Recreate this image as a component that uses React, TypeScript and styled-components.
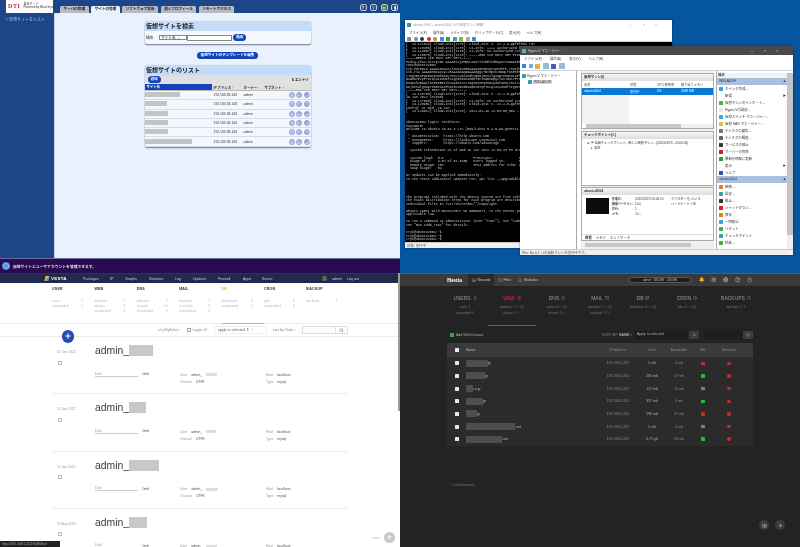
import React from "react";
import styled, { createGlobalStyle } from "styled-components";
import { Bell, Camera, File, Folder, Globe, Home, List, Plus, Power, Search, Settings, User, ArrowRight, BarChart2, Database, Clock, Mail, Info, ArrowUp, Pencil, Copy, Trash2, HelpCircle, FileText } from "lucide-react";

const JP = `"Liberation Sans", "Noto Sans CJK JP", sans-serif`;

const Global = createGlobalStyle`
  html, body { margin: 0; padding: 0; background: #fff; }
  #root { width: 800px; height: 547px; overflow: hidden; }
  * { box-sizing: border-box; }
`;

const Page = styled.div`
  width: 800px; height: 547px;
  display: grid;
  grid-template-columns: 400px 400px;
  grid-template-rows: 273px 274px;
  font-family: ${JP};
  overflow: hidden;
`;
const Pane = styled.section`
  position: relative; overflow: hidden; filter: blur(0.35px);
  min-width: 0; min-height: 0;
`;
const Blur = styled.span<{ $w: number; $h?: number; $c?: string }>`
  display: inline-block; width: ${(p) => p.$w}px; height: ${(p) => p.$h ?? 6}px;
  background: ${(p) => p.$c ?? "#c4c4c4"}; filter: blur(0.6px); flex: none;
`;

/* ---------- pane 1: server panel ---------- */
const PanelPane = styled(Pane)`
  display: grid; grid-template-columns: 54px 1fr; grid-template-rows: 12.5px 245.5px 15px;
  background: #e9f1fd;
`;
const PanelHeader = styled.header`
  grid-column: 1 / 3; background: #1c4687; display: flex; align-items: flex-end; padding-left: 6px;
`;
const Logo = styled.div`
  width: 47px; height: 12.5px; background: #fff; align-self: flex-start; display: flex; align-items: center; gap: 3px; padding-left: 2px;
`;
const LogoMark = styled.span`
  color: #c8232c; font-size: 6px; font-weight: 700; letter-spacing: 0.6px; font-family: "Liberation Serif", serif;
`;
const LogoText = styled.span`
  font-size: 3px; line-height: 3.6px; color: #333; white-space: nowrap;
`;
const PanelTabs = styled.nav`
  display: flex; gap: 2.6px; margin-left: 7px;
`;
const PanelTab = styled.div<{ $on?: boolean }>`
  height: 6.5px; padding: 0 3.5px; font-size: 3.6px; line-height: 7px; white-space: nowrap;
  background: ${(p) => (p.$on ? "#e9f1fd" : "#b7bcc4")}; color: #222; font-weight: 700; border-radius: 1.5px 1.5px 0 0;
`;
const HeadIcons = styled.div`
  margin-left: auto; display: flex; gap: 3.5px; padding: 0 2px 1.5px 0;
`;
const HeadIcon = styled.span<{ $c?: string }>`
  width: 7px; height: 7px; border-radius: 2px; border: 0.6px solid #bcd; background: ${(p) => p.$c ?? "#2a4f8e"};
  color: #fff; display: flex; align-items: center; justify-content: center; font-size: 4px; font-weight: 700;
`;
const Sidebar = styled.aside`
  background: #1c4687; color: #9ec0ee; font-size: 4px; padding: 3px 0 0 5px; white-space: nowrap;
`;
const PanelMain = styled.main`
  display: flex; flex-direction: column; align-items: center; padding: 8.5px 0 0 0; min-height: 0; border-left: 0.5px solid #c3d3ea;
`;
const Card = styled.div`
  width: 166px; background: #f4f8fe; border-radius: 2px; box-shadow: 0 1px 1.5px rgba(40,50,70,.65); overflow: hidden;
`;
const CardTitle = styled.div`
  height: 10px; background: #c5dcf8; font-size: 6px; font-weight: 700; line-height: 10px; padding-left: 1.5px; color: #222;
`;
const SearchRow = styled.div`
  height: 13px; display: flex; align-items: center; font-size: 3.6px; padding: 0 1.5px; color: #222;
`;
const Select = styled.span`
  margin-left: 6px; width: 28px; height: 5.5px; border: 0.5px solid #888; background: #fff; font-size: 3.6px; line-height: 5px; padding-left: 1px;
`;
const TextInput = styled.span`
  width: 45px; height: 6px; border: 0.5px solid #888; background: #fff;
`;
const BlueBtn = styled.span<{ $ml?: number; $wide?: boolean }>`
  margin-left: ${(p) => p.$ml ?? 0}px; display: inline-block; height: 7px; padding: 0 ${(p) => (p.$wide ? 4 : 3)}px;
  background: #1343b8; color: #fff; font-size: 3.6px; line-height: 7px; font-weight: 700; border-radius: 3.5px; white-space: nowrap;
`;
const CenterBtn = styled(BlueBtn)`
  margin: 8px 0 6px; width: 61px; text-align: center; padding: 0;
`;
const ListBar = styled.div`
  height: 9px; background: #e0e0e0; display: flex; justify-content: space-between; align-items: center; padding: 0 2px 0 3px; font-size: 3.4px; font-weight: 700;
`;
const RowGrid = styled.div<{ $head?: boolean }>`
  display: grid; grid-template-columns: 69px 30px 21px 22px 24px; align-items: center;
  height: ${(p) => (p.$head ? 7 : 9.3)}px; font-size: 3.4px; color: #333;
  background: ${(p) => (p.$head ? "#e0e0e0" : "transparent")};
  border-bottom: 0.5px solid ${(p) => (p.$head ? "#bbb" : "#d2dceb")};
  font-weight: ${(p) => (p.$head ? 700 : 400)};
  white-space: nowrap;
`;
const SiteHead = styled.span`
  background: #1343b8; color: #fff; height: 6px; line-height: 6px; padding-left: 2px; align-self: start; margin-right: 1.5px;
`;
const RowActions = styled.span`
  display: flex; gap: 1.2px; justify-content: flex-end; padding-right: 1px; color: #4d66b8;
`;
const RoundIcon = styled.span`
  width: 6px; height: 6px; border-radius: 50%; background: #d4dcf3; border: 0.4px solid #8ea0d4; display: flex; align-items: center; justify-content: center;
`;
const PanelFoot = styled.footer`
  grid-column: 1 / 3; background: #2a0b52; border-top: 0.7px solid #6a6a9a; display: flex; align-items: center; gap: 3px; padding-left: 2px; color: #ddd; font-size: 3.8px; font-weight: 700;
`;
const InfoDot = styled.span`
  width: 8px; height: 8px; border-radius: 50%; background: #3f7fd8; color: #fff; display: flex; align-items: center; justify-content: center;
`;

const sites = [35, 22, 23, 23, 23, 47];

function ServerPanel() {
  return (
    <PanelPane>
      <PanelHeader>
        <Logo>
          <LogoMark>DTI</LogoMark>
          <LogoText>自社サーバ<br />Powered by BlueOnyx</LogoText>
        </Logo>
        <PanelTabs>
          <PanelTab>サーバの管理</PanelTab>
          <PanelTab $on>サイトの管理</PanelTab>
          <PanelTab>ソフトウェア更新</PanelTab>
          <PanelTab>個人プロフィール</PanelTab>
          <PanelTab>リモートアクセス</PanelTab>
        </PanelTabs>
        <HeadIcons>
          <HeadIcon>?</HeadIcon>
          <HeadIcon>≡</HeadIcon>
          <HeadIcon $c="#3e8a45">●</HeadIcon>
          <HeadIcon>▮</HeadIcon>
        </HeadIcons>
      </PanelHeader>
      <Sidebar>✎ 仮想サイトをリスト</Sidebar>
      <PanelMain>
        <Card>
          <CardTitle>仮想サイトを検索</CardTitle>
          <SearchRow>
            検索
            <Select>サイト名 ⌄</Select>
            <TextInput />
            <BlueBtn $ml={1}>検索</BlueBtn>
          </SearchRow>
        </Card>
        <CenterBtn $wide>仮想サイトのテンプレートを編集</CenterBtn>
        <Card>
          <CardTitle>仮想サイトのリスト</CardTitle>
          <ListBar>
            <BlueBtn>追加</BlueBtn>
            <span>6 エントリ</span>
          </ListBar>
          <RowGrid $head>
            <SiteHead>サイト名</SiteHead>
            <span>IP アドレス ↑</span>
            <span>オーナー ↑</span>
            <span>サブネット ↑</span>
            <span />
          </RowGrid>
          {sites.map((w, i) => (
            <RowGrid key={i}>
              <span><Blur $w={w} $h={5} /></span>
              <span>192.163.58.146</span>
              <span>admin</span>
              <span />
              <RowActions>
                <RoundIcon><Pencil size={3.5} /></RoundIcon>
                <RoundIcon><Copy size={3.5} /></RoundIcon>
                <RoundIcon><Trash2 size={3.5} /></RoundIcon>
              </RowActions>
            </RowGrid>
          ))}
        </Card>
      </PanelMain>
      <PanelFoot>
        <InfoDot><Info size={6} /></InfoDot>
        仮想サイトとユーザアカウントを管理できます。
      </PanelFoot>
    </PanelPane>
  );
}

/* ---------- pane 2: desktop windows ---------- */
const Desktop = styled(Pane)`
  background: #06569f;
`;
const Win = styled.div<{ $x: number; $y: number; $w: number; $h: number }>`
  position: absolute; left: ${(p) => p.$x}px; top: ${(p) => p.$y}px; width: ${(p) => p.$w}px; height: ${(p) => p.$h}px;
  background: #fff; display: flex; flex-direction: column; box-shadow: 0 0 2px rgba(0,0,0,.5);
  font-size: 3.4px; color: #333; white-space: nowrap;
`;
const TitleBar = styled.div<{ $dark?: boolean }>`
  height: 9px; flex: none; display: flex; align-items: center; gap: 2px; padding: 0 5px 0 2px;
  background: ${(p) => (p.$dark ? "#4a4a4a" : "#fff")}; color: ${(p) => (p.$dark ? "#ccc" : "#999")};
`;
const WinCtl = styled.span<{ $dark?: boolean }>`
  margin-left: auto; letter-spacing: 10px; color: ${(p) => (p.$dark ? "#ccc" : "#999")};
`;
const MenuBar = styled.div<{ $gap: number }>`
  height: 7px; flex: none; display: flex; align-items: center; gap: ${(p) => p.$gap}px; padding-left: 4px; color: #444; font-size: 3.4px;
`;
const ToolBar = styled.div<{ $h: number }>`
  height: ${(p) => p.$h}px; flex: none; display: flex; align-items: center; gap: 2.5px; padding-left: 2px; border-bottom: 0.5px solid #c8d4e0;
`;
const Tool = styled.span<{ $c: string; $round?: boolean; $s?: number }>`
  width: ${(p) => p.$s ?? 4}px; height: ${(p) => p.$s ?? 4}px; background: ${(p) => p.$c}; border-radius: ${(p) => (p.$round ? "50%" : "0.5px")}; flex: none;
`;
const Console = styled.pre`
  flex: 1; min-height: 0; margin: 0; background: #000; color: #c9c9c9; font-family: "Liberation Mono", monospace; font-size: 3.3px; line-height: 3.55px; padding: 1px 0 0 1px; overflow: hidden;
`;
const StatusBar = styled.div`
  height: 6px; flex: none; background: #efefef; color: #555; font-size: 3.4px; line-height: 6px; padding-left: 2px; border-top: 0.5px solid #ccc;
`;
const HvBody = styled.div`
  flex: 1; min-height: 0; display: grid; grid-template-columns: 57px 4px 133px 2px 71px 6px;
  background: #fff;
`;
const Tree = styled.div`
  padding: 2px 0 0 2px; border-right: 0.5px solid #aaa; display: flex; flex-direction: column; gap: 1px; color: #444;
`;
const TreeItem = styled.div<{ $in?: number }>`
  display: flex; align-items: center; gap: 1px; height: 5px; margin-left: ${(p) => p.$in ?? 0}px;
`;
const TreeLabel = styled.span<{ $sel?: boolean }>`
  background: ${(p) => (p.$sel ? "#d3d3d3" : "transparent")}; padding: 0 1px;
`;
const Center = styled.div`
  grid-column: 3; display: flex; flex-direction: column; min-width: 0; background: #f0f0f0; padding-top: 2px;
`;
const Box = styled.div<{ $h: number }>`
  height: ${(p) => p.$h}px; flex: none; background: #fff; border: 0.5px solid #aaa; margin-bottom: 1.5px; display: flex; flex-direction: column; overflow: hidden;
`;
const BoxHead = styled.div`
  height: 7px; flex: none; background: linear-gradient(#f7f7f7, #dcdcdc); font-size: 3.4px; font-weight: 700; line-height: 7px; padding-left: 2px; color: #333;
`;
const VmCols = styled.div<{ $sel?: boolean }>`
  display: grid; grid-template-columns: 46px 27px 24px 1fr; height: ${(p) => (p.$sel ? 6.5 : 7)}px; align-items: center; padding-left: 2px; flex: none; font-size: 3.2px;
  background: ${(p) => (p.$sel ? "#0a78d7" : "transparent")}; color: ${(p) => (p.$sel ? "#fff" : "#444")};
`;
const VmFill = styled.div`
  flex: 1; min-height: 0; background: linear-gradient(to right, #f3f3f3 0 47px, #fff 47px);
`;
const HScroll = styled.div<{ $fill: number }>`
  height: 4px; flex: none; background: linear-gradient(to right, #c8c8c8 ${(p) => p.$fill}%, #efefef ${(p) => p.$fill}%); margin: 0 0 0 4px;
`;
const CpTree = styled.div`
  padding: 2px 0 0 5px; display: flex; flex-direction: column; gap: 0.6px; line-height: 4.4px; font-size: 3.1px;
`;
const Detail = styled.div`
  flex: 1; min-height: 0; display: grid; grid-template-columns: 26px 23px 36px 1fr; grid-template-rows: repeat(4, 5px); padding: 2px 1px 0 4px; line-height: 5px; font-size: 3.1px;
`;
const Thumb = styled.div`
  grid-row: 1 / 5; width: 23px; height: 16px; background: #0b0b0b; margin-top: 1px;
`;
const DetailLabel = styled.b`
  font-size: 2.9px;
`;
const DetailTabs = styled.div`
  display: flex; gap: 4px; padding: 0 0 0 3px; height: 6px; line-height: 6px; margin-top: auto; border-top: 0.5px solid #ddd; flex: none;
`;
const Actions = styled.div`
  grid-column: 5; background: #fff; border-left: 0.5px solid #aaa; display: flex; flex-direction: column; overflow: hidden; padding-top: 2px;
`;
const ActionHead = styled.div`
  height: 5px; line-height: 5px; font-weight: 700; background: #f2f2f2; padding-left: 1px; flex: none;
`;
const ActionBand = styled.div<{ $mt?: number }>`
  height: 7px; flex: none; background: #a7c1de; line-height: 7px; padding: 0 1px 0 2px; display: flex; justify-content: space-between; margin-top: ${(p) => p.$mt ?? 0}px;
`;
const ActionRow = styled.div`
  height: 7px; flex: none; display: flex; align-items: center; gap: 2px; padding: 0 1px 0 2px;
`;
const Arrow = styled.span`
  margin-left: auto; font-size: 3px;
`;
const VScroll = styled.div`
  grid-column: 6; background: linear-gradient(#c4c4c4 0 92%, #efefef 92%); margin: 2px 0 0 0;
`;

const log = `[  14.122029] cloud-init[1170]: Cloud-init v. 22.2-0-g9f8f0da ran
[  14.123456] cloud-init[1170]: ci-info: ++++ Authorized keys from /home
[  14.124567] cloud-init[1170]: ci-info: no authorized SSH keys fingerprints
[  14.125678] cloud-init[1170]: -----END SSH HOST KEY FINGERPRINTS-----
-----BEGIN SSH HOST KEY KEYS-----
ecdsa-sha2-nistp256 AAAAE2VjZHNhLXNoYTItbmlzdHAyNTYAAAAIbmlzdHAyNTYAAABBBOmxJ5
root@ubuntu2004
ssh-ed25519 AAAAC3NzaC1lZDI1NTE5AAAAIGx0R1qY4vn3hPk root@ubuntu2004
ssh-rsa AAAAB3NzaC1yc2EAAAADAQABAAABgQC7bV3pXk2mWqLf9sE8nR0tYhUa4dKzJc
tJ6gVm1oPqZ8wXy3NfAe5LrH2cSuD7iK0bTgO9jMnV4lQxWpYe6RzU1aFhGs3KvBn8
mCw0DtE2yP7oLqJ4iXuN5fS1gHzR9kVaM6bT3cYeW8nOpQ2lUxJdKs7FrGh0vZtAi4
bN3pXk2mWqLf9sE8nR0tYhUa4dKzJctJ6gVm1oPqZ8wXy3NfAe5LrH2cSuD7iK0bTg
O9jMnV4lQxWpYe6RzU1aFhGs3KvBn8mCw0DtE2yP7oLqJ4iXuN5fS1gHzR9kVaM6bT
-----END SSH HOST KEY KEYS-----
[  14.126789] cloud-init[1170]: Cloud-init v. 22.2-0-g9f8f0da finished at Wed,
19 Jan 2022 seconds.
[  14.127890] cloud-init[1170]: ci-info: no authorized SSH keys fingerprints
[  14.128901] cloud-init[1170]: Cloud-init v. 22.2-0-g9f8f0da running 'modules:
config' at Wed, 19 Jan.
[  14.129012] cloud-init[1170]: 2022-01-19 12:03:05,884 - util.py[WARNING]:


ubuntu2004 login: tenshinra
Password:
Welcome to Ubuntu 20.04.3 LTS (GNU/Linux 5.4.0-96-generic x86_64)

 * Documentation:  https://help.ubuntu.com
 * Management:     https://landscape.canonical.com
 * Support:        https://ubuntu.com/advantage

  System information as of Wed 19 Jan 2022 12:03:13 PM UTC

  System load:  0.0               Processes:             103
  Usage of /:   4.8% of 61.31GB   Users logged in:       0
  Memory usage: 15%               IPv4 address for eth0: 192.168.0.10
  Swap usage:   0%

97 updates can be applied immediately.
To see these additional updates run: apt list --upgradable




The programs included with the Ubuntu system are free software;
the exact distribution terms for each program are described in the
individual files in /usr/share/doc/*/copyright.

Ubuntu comes with ABSOLUTELY NO WARRANTY, to the extent permitted by
applicable law.

To run a command as administrator (user "root"), use "sudo <command>".
See "man sudo_root" for details.

tryk@ubuntu2004:~$
tryk@ubuntu2004:~$
tryk@ubuntu2004:~$`;

const hvActions: [string, string, boolean?][] = [
  ["#3aa0dc", "クイック作成..."],
  ["#ffffff", "新規", true],
  ["#57a85a", "仮想マシンのインポート..."],
  ["#e6e6e6", "Hyper-Vの設定..."],
  ["#4aa0d8", "仮想スイッチ マネージャー..."],
  ["#e2c040", "仮想 SAN マネージャー..."],
  ["#777777", "ディスクの編集..."],
  ["#666666", "ディスクの検査..."],
  ["#333333", "サービスの停止"],
  ["#d02020", "サーバーの削除"],
  ["#2a9a3a", "最新の情報に更新"],
  ["#ffffff", "表示", true],
  ["#2a50a8", "ヘルプ"],
];
const vmActions: [string, string][] = [
  ["#e08030", "接続..."],
  ["#3aa0a8", "設定..."],
  ["#333333", "停止..."],
  ["#d02020", "シャットダウン..."],
  ["#e08020", "保存"],
  ["#4aa0d8", "一時停止"],
  ["#40b040", "リセット"],
  ["#3aa0a8", "チェックポイント"],
  ["#40b040", "移動..."],
];

function DesktopPane() {
  return (
    <Desktop>
      <Win $x={5} $y={20} $w={267} $h={228}>
        <TitleBar><Tool $c="#2a9a9a" />ubuntu2004 - ubuntu2004 上の仮想マシン接続<WinCtl>—□×</WinCtl></TitleBar>
        <MenuBar $gap={6}>
          <span>ファイル(F)</span><span>操作(A)</span><span>メディア(M)</span><span>クリップボード(C)</span><span>表示(V)</span><span>ヘルプ(H)</span>
        </MenuBar>
        <ToolBar $h={6}>
          <Tool $c="#888" /><Tool $c="#888" $round /><Tool $c="#333" $round /><Tool $c="#d03030" $round /><Tool $c="#e08020" $round />
          <Tool $c="#3a90d8" /><Tool $c="#30a040" /><Tool $c="#3aa0a8" /><Tool $c="#88b050" /><Tool $c="#aaa" /><Tool $c="#3a90d8" />
        </ToolBar>
        <Console>{log}</Console>
        <StatusBar>状態: 実行中</StatusBar>
      </Win>
      <Win $x={120} $y={46} $w={273} $h={209}>
        <TitleBar $dark><Tool $c="#5ab0c0" />Hyper-V マネージャー<WinCtl $dark>—□×</WinCtl></TitleBar>
        <MenuBar $gap={8}>
          <span>ファイル(F)</span><span>操作(A)</span><span>表示(V)</span><span>ヘルプ(H)</span>
        </MenuBar>
        <ToolBar $h={9}>
          <Tool $c="#2a8ad8" /><Tool $c="#7aa8d0" /><Tool $c="#e0b040" $s={5} /><Tool $c="#9ab8d8" $s={6} /><Tool $c="#3a60b8" $s={5} /><Tool $c="#9ab8d8" $s={6} />
        </ToolBar>
        <HvBody>
          <Tree>
            <TreeItem><Tool $c="#3aa0b0" />Hyper-V マネージャー</TreeItem>
            <TreeItem $in={6}><Tool $c="#3aa0b0" /><TreeLabel $sel>WIN-ADOF</TreeLabel></TreeItem>
          </Tree>
          <Center>
            <Box $h={56}>
              <BoxHead>仮想マシン(I)</BoxHead>
              <VmCols><span>名前</span><span>状態</span><span>CPU 使用率</span><span>割り当てメモリ</span></VmCols>
              <VmCols $sel><span>ubuntu2004</span><span>実行中</span><span>0%</span><span>2048 MB</span></VmCols>
              <VmFill />
              <HScroll $fill={75} />
            </Box>
            <Box $h={55}>
              <BoxHead>チェックポイント(C)</BoxHead>
              <CpTree>
                <span>⊟ ▣ 自動チェックポイント - 新しい仮想マシン - (2022/01/19 - 20:00:00)</span>
                <span>&nbsp;&nbsp;&nbsp;&nbsp;&nbsp;▸ 現在</span>
              </CpTree>
            </Box>
            <Box $h={54}>
              <BoxHead>ubuntu2004</BoxHead>
              <Detail>
                <Thumb />
                <DetailLabel>作成日:</DetailLabel><span>2022/01/19 20:00:10</span><span>クラスター化: いいえ</span>
                <DetailLabel>構成バージョン:</DetailLabel><span>10.0</span><span>ハートビート: OK</span>
                <DetailLabel>世代:</DetailLabel><span>1</span><span />
                <DetailLabel>メモ:</DetailLabel><span>なし</span><span />
              </Detail>
              <DetailTabs><b>概要</b><span>メモリ</span><span>ネットワーク</span></DetailTabs>
            </Box>
            <HScroll $fill={82} />
          </Center>
          <Actions>
            <ActionHead>操作</ActionHead>
            <ActionBand>WIN-ADOF<span>▲</span></ActionBand>
            {hvActions.map(([c, t, arrow]) => (
              <ActionRow key={t}><Tool $c={c} />{t}{arrow && <Arrow>▶</Arrow>}</ActionRow>
            ))}
            <ActionBand>ubuntu2004<span>▲</span></ActionBand>
            {vmActions.map(([c, t]) => (
              <ActionRow key={t}><Tool $c={c} />{t}</ActionRow>
            ))}
          </Actions>
          <VScroll />
        </HvBody>
        <StatusBar>Win: No.0.1 つの仮想マシンを実行中です。</StatusBar>
      </Win>
    </Desktop>
  );
}

/* ---------- pane 3: Vesta ---------- */
const VestaPane = styled(Pane)`
  background: #fff; color: #555; display: flex; flex-direction: column;
`;
const VestaNav = styled.nav`
  height: 10px; flex: none; background: #1f2a4c; border-top: 1px solid #3a2a6a; color: #c9cfdd; font-size: 3.6px; display: flex; align-items: center; padding-left: 45px; position: relative;
`;
const VestaBrand = styled.span`
  color: #fff; font-size: 4.4px; font-weight: 700; letter-spacing: .3px; display: flex; gap: 2px; align-items: center; width: 38px;
`;
const BrandMark = styled.span`
  width: 4px; height: 5px; background: linear-gradient(135deg, #f5b52e 50%, #4aa3e8 50%); transform: skewX(-14deg);
`;
const NavItem = styled.span<{ $w: number }>`
  width: ${(p) => p.$w}px; flex: none;
`;
const VestaStats = styled.div`
  height: 41px; flex: none; display: grid; grid-template-columns: repeat(7, 42.4px); padding-left: 52px; padding-top: 3.5px; border-bottom: 0.7px solid #eee;
`;
const StatCol = styled.div<{ $on?: boolean }>`
  display: flex; flex-direction: column; height: 37.5px; border-bottom: ${(p) => (p.$on ? "1px solid #f5b52e" : "0 none")};
`;
const StatTitle = styled.div<{ $on?: boolean }>`
  font-size: 3.6px; font-weight: 700; height: 12.5px; letter-spacing: .2px; color: ${(p) => (p.$on ? "#f5b52e" : "#333")};
`;
const StatLine = styled.div`
  display: flex; font-size: 3.4px; color: #bbb; height: 4.9px; width: 31px; justify-content: space-between;
`;
const VestaBar = styled.div`
  height: 13px; flex: none; display: flex; align-items: center; justify-content: flex-end; padding-right: 52px; font-size: 3.6px; color: #999; border-bottom: 0.5px solid #eee; position: relative;
`;
const ToggleBox = styled.span`
  width: 3.5px; height: 3.5px; border: 0.5px solid #aaa; margin: 0 1.5px 0 8px;
`;
const BarSelect = styled.span`
  margin-left: 7px; width: 53px; height: 8px; border: 0.5px solid #eee; line-height: 7.5px; padding-left: 3px; color: #666;
`;
const SortBy = styled.span`
  margin-left: 6px; color: #888; white-space: nowrap;
`;
const SearchField = styled.span`
  margin-left: 6px; width: 46px; height: 8px; border: 0.5px solid #ddd; display: flex; justify-content: flex-end; align-items: stretch; color: #555;
`;
const SearchBtn = styled.span`
  width: 12px; border-left: 0.5px solid #ddd; display: flex; align-items: center; justify-content: center;
`;
const AddCircle = styled.span`
  position: absolute; left: 61.5px; top: 6px; width: 12.5px; height: 12.5px; border-radius: 50%; background: #1f4db0; color: #fff; display: flex; align-items: center; justify-content: center;
`;
const DbList = styled.div`
  flex: 1; min-height: 0; padding: 0 52px; overflow: hidden;
`;
const DbItem = styled.article`
  height: 57.3px; display: grid; grid-template-columns: 43px 85px 86px 1fr; grid-template-rows: 26px 7px 7px; padding-top: 8px; border-bottom: 0.6px solid #eee; flex: none;
`;
const DbDate = styled.div`
  grid-row: 1 / 4; font-size: 3.4px; color: #999; padding: 5px 0 0 5px; display: flex; flex-direction: column; gap: 6.5px;
`;
const SmallBox = styled.span`
  width: 4px; height: 4px; border: 0.5px solid #bbb; margin-left: 0.5px;
`;
const DbName = styled.div`
  grid-column: 2 / 5; display: flex; align-items: flex-start; font-size: 10.4px; color: #3a3a3a; line-height: 12px;
`;
const DbCell = styled.div`
  font-size: 3.4px; color: #999; display: flex; gap: 4px; align-items: center; height: 7px;
`;
const DbDisk = styled(DbCell)`
  justify-content: space-between; width: 54px; height: 6px;
`;
const DiskLabel = styled.span`
  width: 47px; border-bottom: 0.5px solid #ccc;
`;
const DbVal = styled.b`
  color: #555; font-weight: 400;
`;
const ScrollThumb = styled.div`
  position: absolute; right: 0; top: 0; width: 2.5px; height: 138px; background: #9a9a9a;
`;
const TopBtn = styled.div`
  position: absolute; right: 0; bottom: 0; display: flex; align-items: center; gap: 4px; padding: 0 5px 4px 0; font-size: 3.4px; color: #bbb;
`;
const TopCircle = styled.span`
  width: 11px; height: 11px; border-radius: 50%; background: #c8c8c8; color: #fff; display: flex; align-items: center; justify-content: center;
`;
const UrlTip = styled.div`
  position: absolute; left: 0; bottom: 0; width: 60px; height: 6px; background: #222; color: #aaa; font-size: 3.4px; line-height: 6px; padding-left: 2px; white-space: nowrap;
`;

const vestaStats = [
  { t: "USER", r: [["users", "1"], ["suspended", "1"]] },
  { t: "WEB", r: [["domains", "7"], ["aliases", "0"], ["suspended", "0"]] },
  { t: "DNS", r: [["domains", "1"], ["records", "14"], ["suspended", "0"]] },
  { t: "MAIL", r: [["domains", "1"], ["accounts", "1"], ["suspended", "0"]] },
  { t: "DB", on: true, r: [["databases", "6"], ["suspended", "0"]] },
  { t: "CRON", r: [["jobs", "8"], ["suspended", "0"]] },
  { t: "BACKUP", r: [["backups", "1"]] },
];
const navItems: [string, number][] = [["Packages", 27], ["IP", 15], ["Graphs", 24], ["Statistics", 26], ["Log", 18], ["Updates", 25], ["Firewall", 25], ["Apps", 19], ["Server", 60]];
const dbs = [
  { d: "17 Jan 2022", w: 24, u: 11 },
  { d: "11 Jan 2022", w: 17, u: 10 },
  { d: "11 Jan 2022", w: 30, u: 12 },
  { d: "17 Aug 2021", w: 18, u: 11 },
];

function VestaScreen() {
  return (
    <VestaPane>
      <VestaNav>
        <VestaBrand><BrandMark />VESTA</VestaBrand>
        {navItems.map(([t, w]) => <NavItem key={t} $w={w}>{t}</NavItem>)}
        <NavItem $w={10}><FileText size={5} color="#f5b52e" /></NavItem>
        <NavItem $w={15}>admin</NavItem>
        <NavItem $w={15}>Log out</NavItem>
      </VestaNav>
      <VestaStats>
        {vestaStats.map((s) => (
          <StatCol key={s.t} $on={s.on}>
            <StatTitle $on={s.on}>{s.t}</StatTitle>
            {s.r.map(([k, v]) => (
              <StatLine key={k}><span>{k}</span><span>{v}</span></StatLine>
            ))}
          </StatCol>
        ))}
      </VestaStats>
      <VestaBar>
        phpMyAdmin
        <ToggleBox />toggle all
        <BarSelect>apply to selected ⇕ &nbsp; ›</BarSelect>
        <SortBy>sort by: Date ↓</SortBy>
        <SearchField><SearchBtn><Search size={4.5} /></SearchBtn></SearchField>
        <AddCircle><Plus size={8} strokeWidth={3} /></AddCircle>
      </VestaBar>
      <DbList>
        {dbs.map((x, i) => (
          <DbItem key={i}>
            <DbDate>{x.d}<SmallBox /></DbDate>
            <DbName>admin_<Blur $w={x.w} $h={11} $c="#c8c8c8" /></DbName>
            <DbDisk><DiskLabel>Disk</DiskLabel><DbVal>0mb</DbVal></DbDisk>
            <DbCell>User <DbVal>admin_</DbVal><Blur $w={x.u} $h={3} $c="#ddd" /></DbCell>
            <DbCell>Host <DbVal>localhost</DbVal></DbCell>
            <span />
            <DbCell>Charset <DbVal>UTF8</DbVal></DbCell>
            <DbCell>Type <DbVal>mysql</DbVal></DbCell>
          </DbItem>
        ))}
      </DbList>
      <ScrollThumb />
      <UrlTip>http://192.168.0.202:8083/list/</UrlTip>
      <TopBtn>more<TopCircle><ArrowUp size={7} strokeWidth={3} /></TopCircle></TopBtn>
    </VestaPane>
  );
}

/* ---------- pane 4: Hestia dark ---------- */
const HestiaPane = styled(Pane)`
  background: #232323; color: #999; display: flex; flex-direction: column;
`;
const HTop = styled.header`
  height: 13px; flex: none; background: #3a3a3a; border-top: 1px solid #1b6ea8; display: flex; align-items: stretch; padding-left: 47px; font-size: 3.5px; color: #ccc;
`;
const HLogo = styled.span`
  width: 21px; color: #fff; font-weight: 700; font-size: 5.5px; display: flex; align-items: center; font-family: "Liberation Serif", serif;
`;
const HTab = styled.span<{ $on?: boolean }>`
  display: flex; align-items: center; gap: 2px; padding: 0 3.5px; background: ${(p) => (p.$on ? "#2a2a2a" : "transparent")};
`;
const HRight = styled.div`
  margin-left: auto; display: flex; align-items: center; gap: 6.5px; padding-right: 48px;
`;
const HPill = styled.span`
  height: 5.5px; width: 62px; border-radius: 3px; background: #1d1d1d; border: 0.4px solid #555; font-size: 3px; line-height: 5px; text-align: center; color: #bbb; margin-right: 1px; white-space: nowrap;
`;
const HStats = styled.div`
  height: 41px; flex: none; display: grid; grid-template-columns: 46px 48px 42px 44px 42px 46px 52px; padding: 8px 0 0 42px;
`;
const HStat = styled.div<{ $on?: boolean }>`
  display: flex; flex-direction: column; align-items: center; white-space: nowrap; height: 32px; border-bottom: ${(p) => (p.$on ? "1px solid #e0245e" : "none")}; font-size: 3px; color: #777; line-height: 6.5px;
`;
const HStatTitle = styled.div<{ $on?: boolean }>`
  font-size: 5px; color: ${(p) => (p.$on ? "#e0245e" : "#999")}; display: flex; gap: 2px; align-items: center; height: 8px; margin-bottom: 1.5px;
`;
const HBar = styled.div`
  height: 16px; flex: none; display: flex; align-items: center; padding: 0 47px; font-size: 3.5px; color: #888;
`;
const AddBtn = styled.span`
  display: flex; align-items: center; gap: 2px; padding-left: 3px; color: #aaa;
`;
const GreenSq = styled.span`
  width: 4px; height: 4px; background: #3fa33f;
`;
const SortLabel = styled.span`
  margin-left: auto; white-space: nowrap;
`;
const SortVal = styled.b`
  color: #aaa;
`;
const HSelect = styled.span`
  margin-left: 3px; width: 52px; height: 7.5px; background: #1d1d1d; line-height: 7.5px; padding-left: 2px; color: #aaa;
`;
const HGo = styled.span`
  width: 10px; height: 8px; background: #3d3d3d; margin-left: 1.5px; display: flex; align-items: center; justify-content: center; color: #bbb;
`;
const HSearch = styled.span`
  margin-left: 5px; width: 38px; height: 8px; background: #1d1d1d;
`;
const HTable = styled.div`
  margin: 0 47px; display: flex; flex-direction: column; flex: none; background: #2b2b2b;
`;
const HRow = styled.div<{ $head?: boolean }>`
  display: grid; grid-template-columns: 19px 132px 40px 28px 26px 22px 30px 9px; align-items: center; text-align: center;
  height: ${(p) => (p.$head ? 14 : 12.67)}px; background: ${(p) => (p.$head ? "#3a3a3a" : "#2b2b2b")}; font-size: 3.5px; color: #888;
`;
const HCheck = styled.span`
  width: 4px; height: 4px; background: #e8e8e8; margin: 0 auto; border-radius: 0.5px;
`;
const HName = styled.span`
  text-align: left; display: flex; align-items: center; color: #bbb;
`;
const HDisk = styled.span`
  color: #aaa;
`;
const Led = styled.span<{ $ok?: boolean; $round?: boolean }>`
  width: 3.6px; height: 3.6px; margin: 0 auto; border-radius: ${(p) => (p.$round ? "50%" : "0.6px")}; background: ${(p) => (p.$ok ? "#35b535" : "#c92a2a")};
`;
const HCount = styled.div`
  padding: 37px 0 0 51px; font-size: 3.5px; color: #777;
`;
const FabRow = styled.div`
  position: absolute; right: 15px; bottom: 17px; display: flex; gap: 6px;
`;
const Fab = styled.span`
  width: 10px; height: 10px; border-radius: 50%; background: #3c3c3c; color: #ddd; display: flex; align-items: center; justify-content: center;
`;

const hStats = [
  { t: "USERS", i: <User size={4} />, l: ["users: 1", "suspended: 0"] },
  { t: "WEB", on: true, i: <Globe size={4} />, l: ["domains: 7 / ∞ (0)", "aliases: 0 / ∞"] },
  { t: "DNS", i: <List size={4} />, l: ["zones: 0 / ∞ (0)", "records: 0 / ∞"] },
  { t: "MAIL", i: <Mail size={4} />, l: ["domains: 1 / ∞ (0)", "accounts: 1 / ∞"] },
  { t: "DB", i: <Database size={4} />, l: ["databases: 4 / ∞ (0)"] },
  { t: "CRON", i: <Clock size={4} />, l: ["jobs: 9 / ∞ (0)"] },
  { t: "BACKUPS", i: <File size={4} />, l: ["backups: 1 / 1"] },
];
const hRows: { w: number; s: string; d: string; b: string; ssl: boolean }[] = [
  { w: 22, s: "jp", d: "1 mb", b: "0 mb", ssl: false },
  { w: 19, s: "jp", d: "285 mb", b: "57 mb", ssl: true },
  { w: 7, s: "co.jp", d: "112 mb", b: "15 mb", ssl: true },
  { w: 17, s: "jp", d: "337 mb", b: "0 mb", ssl: true },
  { w: 11, s: "jp", d: "596 mb", b: "27 mb", ssl: false },
  { w: 49, s: ".net", d: "1 mb", b: "0 mb", ssl: true },
  { w: 36, s: ".net", d: "6.75 gb", b: "94 mb", ssl: true },
];

function HestiaScreen() {
  return (
    <HestiaPane>
      <HTop>
        <HLogo>Hestia</HLogo>
        <HTab $on><Home size={4} />Records</HTab>
        <HTab><Folder size={4} />Files</HTab>
        <HTab><BarChart2 size={4} />Statistics</HTab>
        <HRight>
          <HPill>admin · 385 MB · 230 MB</HPill>
          <Bell size={5.5} color="#f0b429" fill="#f0b429" />
          <Settings size={5.5} />
          <Globe size={5.5} />
          <HelpCircle size={5.5} />
          <Power size={5.5} />
        </HRight>
      </HTop>
      <HStats>
        {hStats.map((s) => (
          <HStat key={s.t} $on={s.on}>
            <HStatTitle $on={s.on}>{s.t} {s.i}</HStatTitle>
            {s.l.map((x) => <span key={x}>{x}</span>)}
          </HStat>
        ))}
      </HStats>
      <HBar>
        <AddBtn><GreenSq />Add Web Domain</AddBtn>
        <SortLabel>SORT BY: <SortVal>NAME ↕</SortVal></SortLabel>
        <HSelect>Apply to selected</HSelect>
        <HGo><ArrowRight size={4} /></HGo>
        <HSearch />
        <HGo><Search size={4} /></HGo>
      </HBar>
      <HTable>
        <HRow $head>
          <HCheck /><HName>Name</HName><span>IP Address</span><span>Disk</span><span>Bandwidth</span><span>SSL</span><span>Statistics</span><span />
        </HRow>
        {hRows.map((r, i) => (
          <HRow key={i}>
            <HCheck />
            <HName><Blur $w={r.w} $h={7} $c="#4e4e4e" />{r.s}</HName>
            <span>192.168.0.202</span>
            <HDisk>{r.d}</HDisk>
            <span>{r.b}</span>
            <Led $ok={r.ssl} />
            <Led $round />
            <span />
          </HRow>
        ))}
      </HTable>
      <HCount>7 web domains</HCount>
      <FabRow>
        <Fab><Camera size={5} /></Fab>
        <Fab><Plus size={5} /></Fab>
      </FabRow>
    </HestiaPane>
  );
}

export default function App() {
  return (
    <>
      <Global />
      <Page>
        <ServerPanel />
        <DesktopPane />
        <VestaScreen />
        <HestiaScreen />
      </Page>
    </>
  );
}
